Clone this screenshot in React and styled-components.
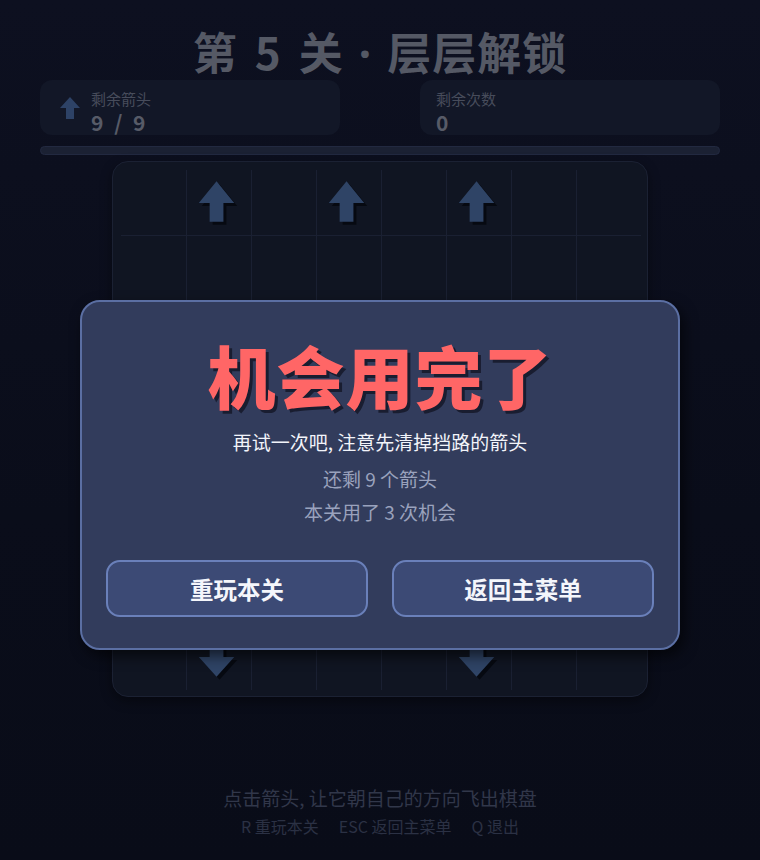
import React from 'react';
import styled, { createGlobalStyle } from 'styled-components';

const GlobalStyle = createGlobalStyle`
  html, body {
    margin: 0;
    padding: 0;
    background: #0a0d19;
  }
  body {
    font-family: "Noto Sans CJK SC", "Noto Sans", sans-serif;
  }
`;

const Page = styled.div`
  position: relative;
  width: 760px;
  height: 860px;
  background: linear-gradient(180deg, #0d1020 0%, #0a0d1a 60%, #090c18 100%);
  display: flex;
  flex-direction: column;
  align-items: center;
  overflow: hidden;
`;

const Title = styled.h1`
  margin: 22px 0 0;
  height: 58px;
  line-height: 58px;
  font-size: 44px;
  font-weight: 700;
  color: #555965;
  letter-spacing: 1px;
  word-spacing: 6px;
  white-space: nowrap;
`;

const Dot = styled.span`
  font-family: "Noto Sans", sans-serif;
  margin: 0 15px;
`;

const StatsRow = styled.div`
  display: flex;
  justify-content: space-between;
  width: 680px;
`;

const StatCard = styled.div`
  width: 300px;
  height: 55px;
  box-sizing: border-box;
  background: #121727;
  border-radius: 12px;
  display: flex;
  align-items: center;
  gap: 10px;
  padding-top: 9px;
  padding-left: ${p => (p.withIcon ? '19px' : '16px')};
`;

const StatIcon = styled.svg`
  width: 22px;
  height: 26px;
  margin-top: -9px;
`;

const StatText = styled.div`
  display: flex;
  flex-direction: column;
`;

const StatLabel = styled.span`
  font-size: 15px;
  line-height: 20px;
  color: #474c5b;
`;

const StatValue = styled.span`
  font-size: 21px;
  line-height: 26px;
  font-weight: 700;
  color: #575b67;
  letter-spacing: 3px;
`;

const Progress = styled.div`
  margin-top: 11px;
  width: 680px;
  height: 9px;
  border-radius: 5px;
  background: #1b2133;
  border: 1px solid #222940;
  box-sizing: border-box;
`;

const Board = styled.div`
  margin-top: 6px;
  width: 536px;
  height: 536px;
  box-sizing: border-box;
  padding: 8px;
  background: #101522;
  border: 1px solid #1b2133;
  border-radius: 16px;
  box-shadow: 0 4px 12px rgba(0, 0, 0, 0.4);
  display: grid;
  grid-template-columns: repeat(8, 65px);
  grid-template-rows: repeat(8, 65px);
`;

const Cell = styled.div`
  border-left: ${p => (p.col > 0 ? '1px solid #1a2032' : 'none')};
  border-top: ${p => (p.row > 0 ? '1px solid #1a2032' : 'none')};
  display: flex;
  align-items: center;
  justify-content: center;
`;

const ArrowSvg = styled.svg`
  width: 65px;
  height: 65px;
  filter: drop-shadow(3px 3px 0 rgba(5, 7, 14, 0.85));
`;

const Footer = styled.div`
  margin-top: 88px;
  display: flex;
  flex-direction: column;
  align-items: center;
`;

const Hint = styled.div`
  font-size: 19px;
  line-height: 26px;
  color: #31374a;
`;

const Keys = styled.div`
  margin-top: 4px;
  font-size: 16px;
  line-height: 22px;
  color: #2b3144;
  display: flex;
  gap: 20px;
`;

const Modal = styled.div`
  position: absolute;
  left: 80px;
  top: 300px;
  width: 600px;
  height: 350px;
  box-sizing: border-box;
  background: #323c5c;
  border: 2px solid #5b6fa3;
  border-radius: 20px;
  box-shadow: 4px 6px 14px rgba(0, 0, 0, 0.6);
  display: flex;
  flex-direction: column;
  align-items: center;
  padding: 33px 24px 0;
`;

const ModalTitle = styled.div`
  font-size: 68px;
  line-height: 80px;
  font-weight: 900;
  color: #ff6666;
  text-shadow: 3px 3px 0 #191d30;
  letter-spacing: 1px;
`;

const ModalLead = styled.div`
  margin-top: 13px;
  font-size: 19px;
  line-height: 28px;
  color: #f2f4fa;
`;

const ModalInfo = styled.div`
  margin-top: ${p => p.gap || 4}px;
  font-size: 19px;
  line-height: 28px;
  color: #9aa2bd;
`;

const ButtonRow = styled.div`
  margin-top: 34px;
  width: 100%;
  display: flex;
  justify-content: space-between;
`;

const Button = styled.button`
  width: 262px;
  height: 57px;
  background: #3c4a75;
  border: 2px solid #6a80ba;
  border-radius: 14px;
  color: #f4f6fb;
  font-family: "Noto Sans CJK SC", sans-serif;
  font-size: 23.5px;
  font-weight: 700;
  cursor: pointer;
`;

const arrows = {
  '0-1': 'up',
  '0-3': 'up',
  '0-5': 'up',
  '7-1': 'down',
  '7-5': 'down',
};

const shapes = {
  up: '30,11 48,33 37,33 37,52 23,52 23,33 12,33',
  down: '30,51 48,31 37,31 37,12 23,12 23,31 12,31',
};

const Arrow = ({ dir }) => (
  <ArrowSvg viewBox="0 0 65 65">
    <polygon points={shapes[dir]} fill="#2f4466" />
  </ArrowSvg>
);

export default function App() {
  const cells = [];
  for (let r = 0; r < 8; r++) {
    for (let c = 0; c < 8; c++) {
      const dir = arrows[`${r}-${c}`];
      cells.push(
        <Cell key={`${r}-${c}`} row={r} col={c}>
          {dir && <Arrow dir={dir} />}
        </Cell>
      );
    }
  }

  return (
    <Page>
      <GlobalStyle />
      <Title>第 5 关<Dot>·</Dot>层层解锁</Title>
      <StatsRow>
        <StatCard withIcon>
          <StatIcon viewBox="0 0 22 26">
            <polygon points="11,2 21,13 15,13 15,24 7,24 7,13 1,13" fill="#2d4266" />
          </StatIcon>
          <StatText>
            <StatLabel>剩余箭头</StatLabel>
            <StatValue>9 / 9</StatValue>
          </StatText>
        </StatCard>
        <StatCard>
          <StatText>
            <StatLabel>剩余次数</StatLabel>
            <StatValue>0</StatValue>
          </StatText>
        </StatCard>
      </StatsRow>
      <Progress />
      <Board>{cells}</Board>
      <Footer>
        <Hint>点击箭头, 让它朝自己的方向飞出棋盘</Hint>
        <Keys>
          <span>R 重玩本关</span>
          <span>ESC 返回主菜单</span>
          <span>Q 退出</span>
        </Keys>
      </Footer>

      <Modal>
        <ModalTitle>机会用完了</ModalTitle>
        <ModalLead>再试一次吧, 注意先清掉挡路的箭头</ModalLead>
        <ModalInfo gap={9}>还剩 9 个箭头</ModalInfo>
        <ModalInfo gap={5}>本关用了 3 次机会</ModalInfo>
        <ButtonRow>
          <Button>重玩本关</Button>
          <Button>返回主菜单</Button>
        </ButtonRow>
      </Modal>
    </Page>
  );
}
